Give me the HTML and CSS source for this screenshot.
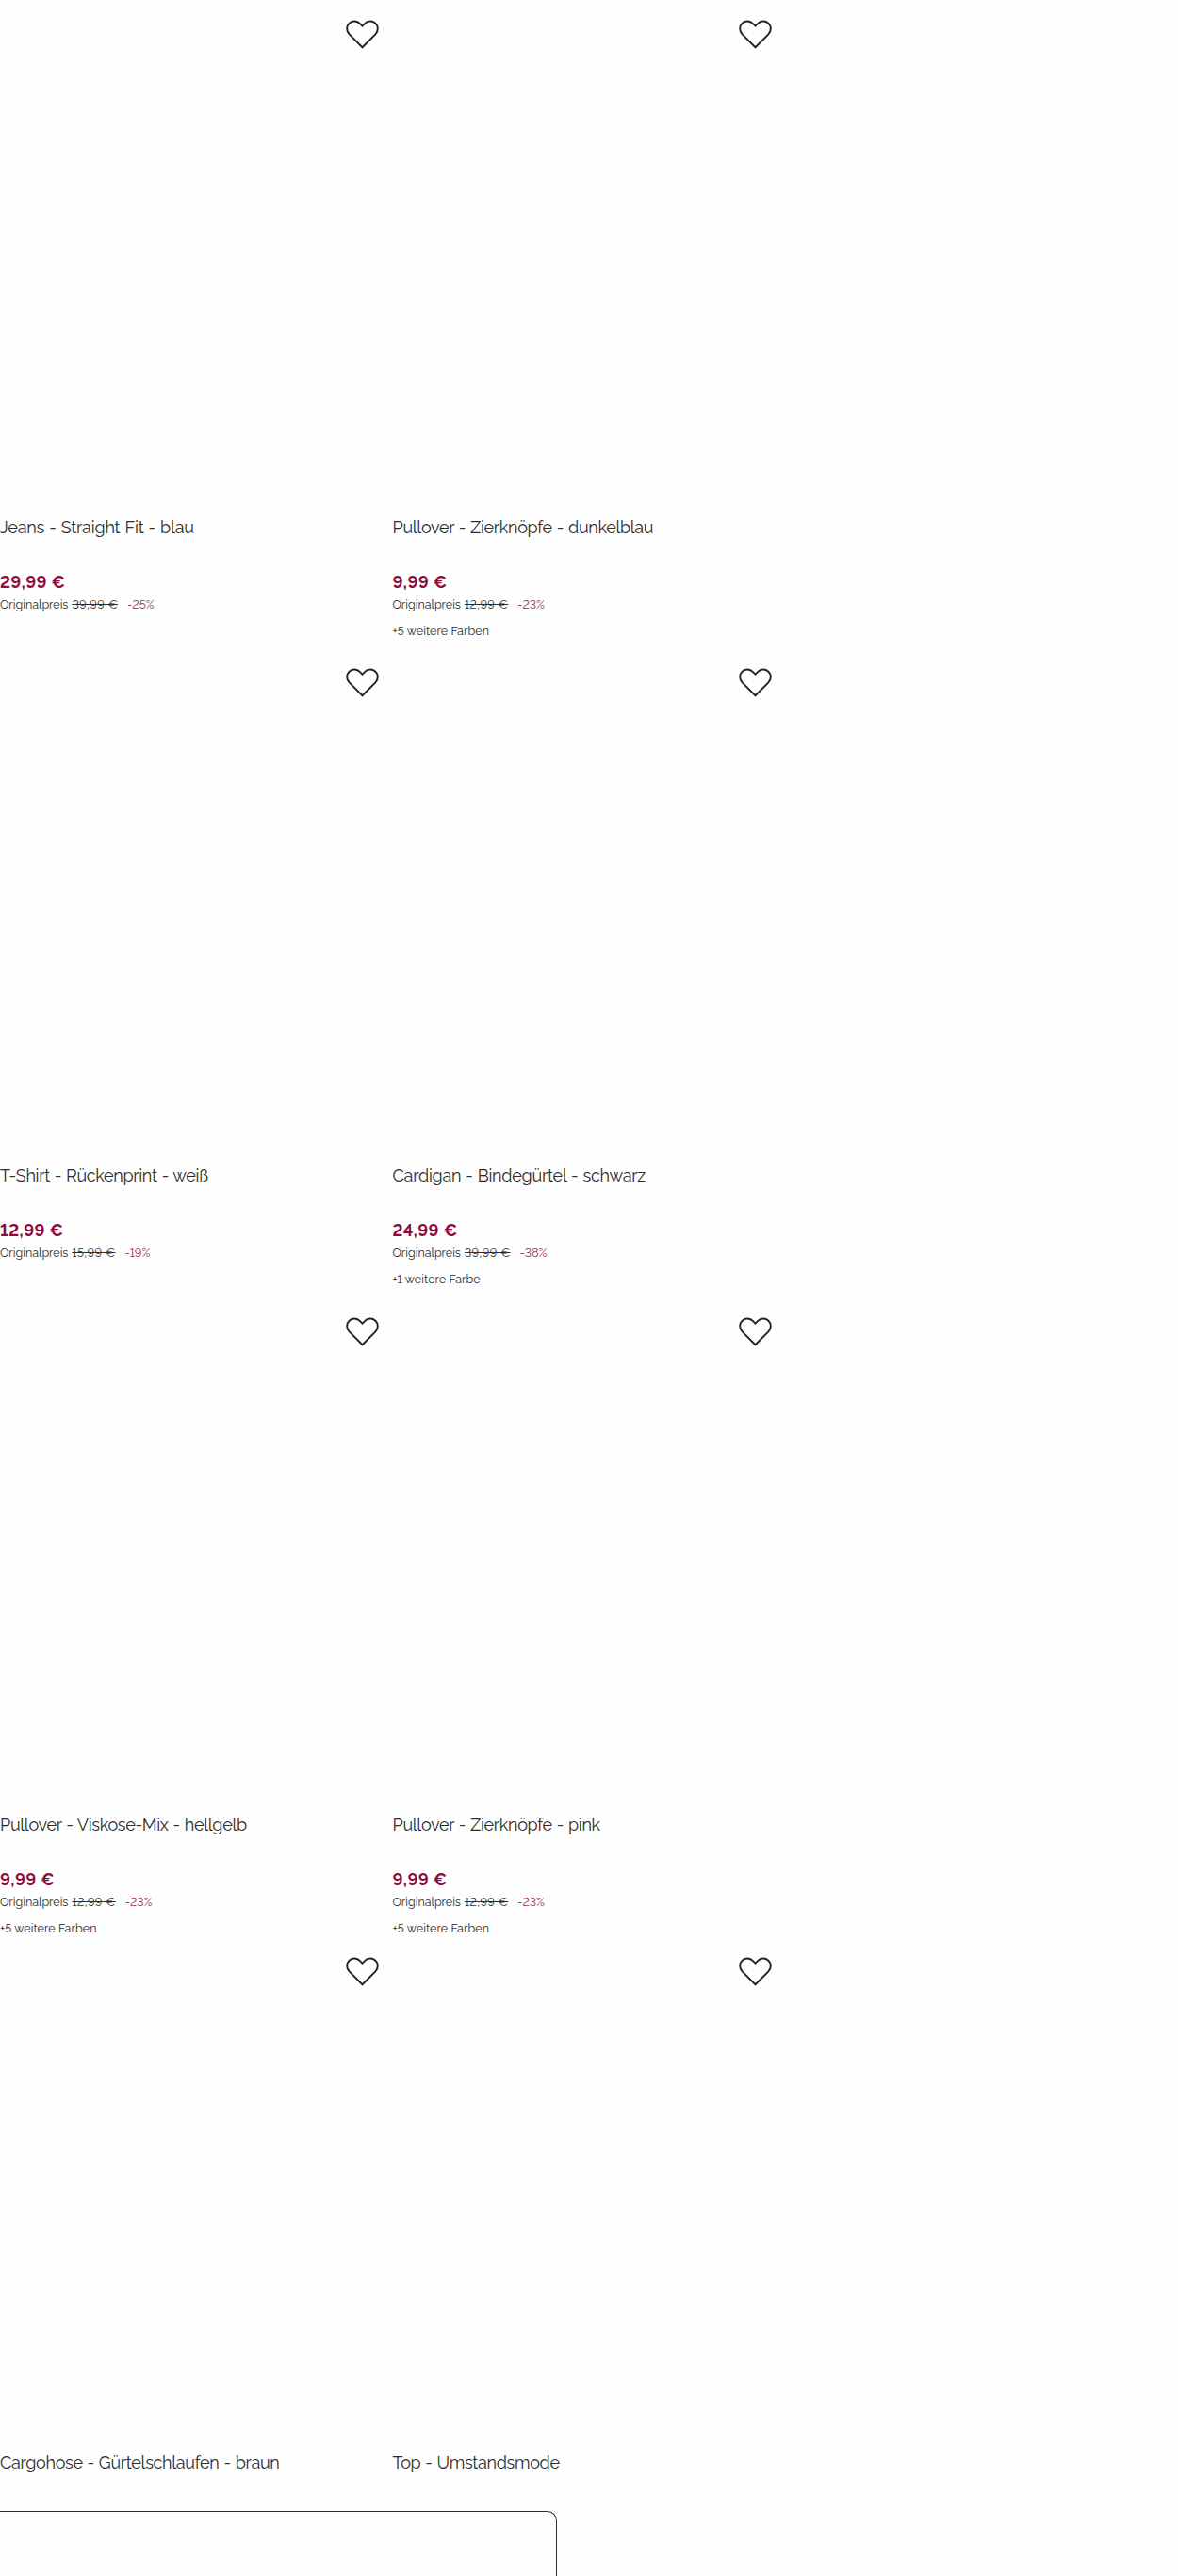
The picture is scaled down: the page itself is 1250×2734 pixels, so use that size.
FILE: index.html
```html
<!DOCTYPE html>
<html lang="de">
<head>
<meta charset="utf-8">
<title>Produkte</title>
<link rel="stylesheet" href="styles.css">
</head>
<body>
<svg class="sprite" aria-hidden="true"><symbol id="heart" viewBox="0 0 36 32"><path d="M18 30.2 3.7 15.9C.2 12.1.4 6.8 3.7 3.8c3.500-3.200 8.400-2.900 11.700.4L18 6.900l2.600-2.700c3.300-3.300 8.200-3.600 11.700-.4 3.300 3 3.500 8.300 0 12.100Z"/></symbol></svg>
<main class="products">
  <article class="card">
    <div class="media"><button class="wish" aria-label="Merken"><svg><use href="#heart"/></svg></button></div>
    <h2 class="title jeans">Jeans - Straight Fit - blau</h2>
    <p class="price">29,99 €</p>
    <p class="original"><span>Originalpreis</span><s>39,99 €</s><span class="discount">-25%</span></p>
  </article>
  <article class="card">
    <div class="media"><button class="wish" aria-label="Merken"><svg><use href="#heart"/></svg></button></div>
    <h2 class="title">Pullover - Zierknöpfe - dunkelblau</h2>
    <p class="price">9,99 €</p>
    <p class="original"><span>Originalpreis</span><s>12,99 €</s><span class="discount">-23%</span></p>
    <p class="colors">+5 weitere Farben</p>
  </article>
  <article class="card">
    <div class="media"><button class="wish" aria-label="Merken"><svg><use href="#heart"/></svg></button></div>
    <h2 class="title">T-Shirt - Rückenprint - weiß</h2>
    <p class="price">12,99 €</p>
    <p class="original"><span>Originalpreis</span><s>15,99 €</s><span class="discount">-19%</span></p>
  </article>
  <article class="card">
    <div class="media"><button class="wish" aria-label="Merken"><svg><use href="#heart"/></svg></button></div>
    <h2 class="title cardigan">Cardigan - Bindegürtel - schwarz</h2>
    <p class="price">24,99 €</p>
    <p class="original"><span>Originalpreis</span><s>39,99 €</s><span class="discount">-38%</span></p>
    <p class="colors">+1 weitere Farbe</p>
  </article>
  <article class="card">
    <div class="media"><button class="wish" aria-label="Merken"><svg><use href="#heart"/></svg></button></div>
    <h2 class="title">Pullover - Viskose-Mix - hellgelb</h2>
    <p class="price">9,99 €</p>
    <p class="original"><span>Originalpreis</span><s>12,99 €</s><span class="discount">-23%</span></p>
    <p class="colors">+5 weitere Farben</p>
  </article>
  <article class="card">
    <div class="media"><button class="wish" aria-label="Merken"><svg><use href="#heart"/></svg></button></div>
    <h2 class="title">Pullover - Zierknöpfe - pink</h2>
    <p class="price">9,99 €</p>
    <p class="original"><span>Originalpreis</span><s>12,99 €</s><span class="discount">-23%</span></p>
    <p class="colors">+5 weitere Farben</p>
  </article>
  <article class="card">
    <div class="media last"><button class="wish" aria-label="Merken"><svg><use href="#heart"/></svg></button></div>
    <h2 class="title">Cargohose - Gürtelschlaufen - braun</h2>
  </article>
  <article class="card">
    <div class="media last"><button class="wish" aria-label="Merken"><svg><use href="#heart"/></svg></button></div>
    <h2 class="title">Top - Umstandsmode</h2>
  </article>
</main>
<aside class="sheet"></aside>
</body>
</html>
```
FILE: styles.css
```css
* { box-sizing: border-box; }
body {
  margin: 0;
  height: 2734px;
  overflow: hidden;
  background: #fefefe;
  color: #2c2c2c;
  font-family: Raleway, Lato, sans-serif;
  font-variant-numeric: lining-nums;
}
.sprite { position: absolute; width: 0; height: 0; }
.products {
  display: grid;
  grid-template-columns: 416.5px 417px;
  grid-template-rows: 688px 689px 679px 678px;
}
.media {
  display: flex;
  justify-content: flex-end;
  align-items: flex-start;
  height: 548px;
  padding: 21px 14.5px 0 0;
}
.media.last { height: 546px; }
.wish { padding: 0; border: 0; background: none; }
.wish svg {
  display: block;
  width: 35px;
  height: 31px;
  fill: none;
  stroke: #242424;
  stroke-width: 2;
}
.title, .price, .original, .colors { margin: 0; white-space: nowrap; }
.title { font-size: 18px; font-weight: 400; line-height: 24px; letter-spacing: -.32px; word-spacing: .7px; }
.jeans { letter-spacing: -.2px; }
.cardigan { letter-spacing: -.25px; }
.price {
  margin-top: 34px;
  color: #8f0b3c;
  font-size: 18px;
  font-weight: 700;
  line-height: 24px;
  letter-spacing: .4px;
}
.original {
  display: flex;
  margin-top: 4px;
  font-size: 12.5px;
  line-height: 16px;
}
.original s { margin-left: 4px; letter-spacing: .4px; }
.discount { margin-left: 10px; color: #982c52; }
.colors { margin-top: 12px; font-size: 12.5px; line-height: 16px; letter-spacing: .08px; }
.sheet {
  position: fixed;
  bottom: 0;
  left: 0;
  width: 591px;
  height: 69px;
  border: solid #303030;
  border-width: 1px 1px 0 0;
  border-top-right-radius: 10px;
  background: #fefefe;
}
```
